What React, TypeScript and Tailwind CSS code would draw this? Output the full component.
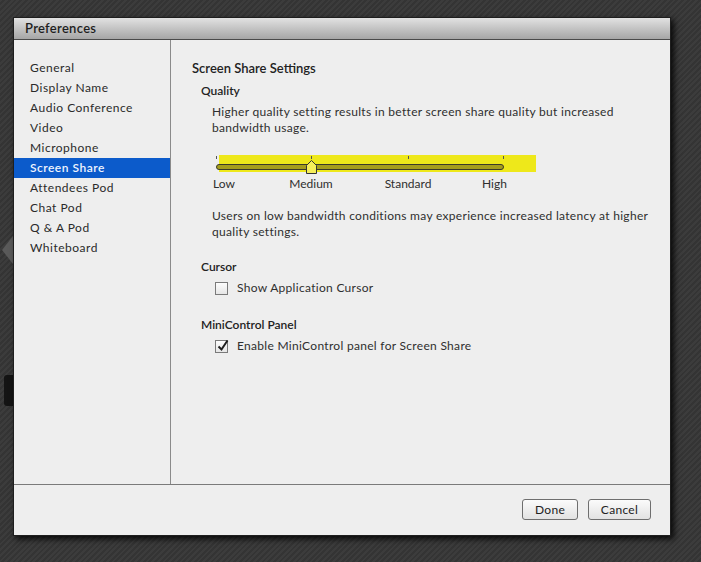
import React from "react";

const font = { fontFamily: "Lato, 'Open Sans', sans-serif" };

const navItems = [
  "General",
  "Display Name",
  "Audio Conference",
  "Video",
  "Microphone",
  "Screen Share",
  "Attendees Pod",
  "Chat Pod",
  "Q & A Pod",
  "Whiteboard",
];

function Checkbox({ checked }: { checked?: boolean }) {
  return (
    <span className="relative inline-block w-[13px] h-[13px] border border-[#7a7a7a] bg-gradient-to-b from-[#fdfdfd] to-[#e6e6e6]">
      {checked && (
        <svg className="absolute left-[1px] top-[-2px]" width="12" height="13" viewBox="0 0 12 13">
          <path d="M1.5 7.5 L4.5 10.5 L10.5 1.5" fill="none" stroke="#1e1e1e" strokeWidth="2" />
        </svg>
      )}
    </span>
  );
}

function Slider() {
  return (
    <div className="relative w-[330px] h-[42px] mt-[14px]">
      <svg width="330" height="26" viewBox="0 0 330 26" className="block">
        <rect x="7" y="5" width="317" height="17" fill="#eee81a" />
        {[4, 99, 196, 291].map((x) => (
          <line key={x} x1={x + 0.5} y1="6" x2={x + 0.5} y2="9" stroke="#555" strokeWidth="1" />
        ))}
        <rect x="4.5" y="14.5" width="287" height="5" rx="2.5" fill="#a59d1c" stroke="#3a3a2a" strokeWidth="1" />
        <polygon points="94.5,23.5 94.5,15.5 99.5,10.5 104.5,15.5 104.5,23.5" fill="#f6ef5a" stroke="#333" strokeWidth="1" />
      </svg>
      <div className="absolute left-[1px] top-[26px] text-[12px] leading-[16px] text-[#2e2e2e]">Low</div>
      <div className="absolute left-[99px] top-[26px] -translate-x-1/2 text-[12px] leading-[16px] text-[#2e2e2e]">Medium</div>
      <div className="absolute left-[196px] top-[26px] -translate-x-1/2 text-[12px] leading-[16px] text-[#2e2e2e]">Standard</div>
      <div className="absolute left-[270px] top-[26px] text-[12px] leading-[16px] text-[#2e2e2e]">High</div>
    </div>
  );
}

export default function App() {
  return (
    <div
      className="relative w-[701px] h-[562px] overflow-hidden bg-[#383838] bg-[repeating-linear-gradient(135deg,#3c3c3c_0px,#3c3c3c_2px,#343434_2px,#343434_4px)] pt-[17px] pl-[13px]"
      style={font}
    >
      <div className="absolute left-[2px] top-[236px] w-0 h-0 border-t-[14px] border-t-transparent border-b-[14px] border-b-transparent border-r-[11px] border-r-[#5a5a5a]" />
      <div className="absolute left-[4px] top-[375px] w-[12px] h-[31px] rounded-[3px] bg-[#141414]" />

      <div className="relative w-[658px] h-[519px] flex flex-col bg-[#eeeeee] border border-[#1e1e1e] shadow-[3px_3px_6px_rgba(0,0,0,0.85)]">
        {/* title bar */}
        <div className="h-[22px] flex items-center pl-[11px] bg-gradient-to-b from-[#e2e2e2] to-[#a6a6a6] border-b border-[#4a4a4a]">
          <span className="text-[13px] font-semibold text-[#1e1e1e] tracking-[0.3px]">Preferences</span>
        </div>

        {/* body */}
        <div className="flex h-[445px] border-b border-[#7a7a7a]">
          <div className="w-[157px] border-r border-[#8a8a8a] pt-[18px]">
            {navItems.map((item) => (
              <div
                key={item}
                className={
                  item === "Screen Share"
                    ? "h-[20px] flex items-center pl-[16px] bg-[#0c5bcb] text-[#eef4ff] font-semibold text-[12px] tracking-[0.5px]"
                    : "h-[20px] flex items-center pl-[16px] text-[#2a2a2a] text-[12px] tracking-[0.5px]"
                }
              >
                {item}
              </div>
            ))}
          </div>

          <div className="flex-1 pl-[21px] pt-[19px] text-[#2e2e2e]">
            <div className="h-[20px] flex items-center text-[13px] font-semibold text-[#222]">Screen Share Settings</div>
            <div className="mt-[2px] ml-[9px] h-[20px] flex items-center text-[12px] font-semibold text-[#222]">Quality</div>
            <div className="ml-[20px] mt-[3px] text-[12px] leading-[16px] w-[450px] tracking-[0.3px]">
              Higher quality setting results in better screen share quality but increased bandwidth usage.
            </div>
            <div className="ml-[20px]">
              <Slider />
            </div>
            <div className="ml-[20px] mt-[16px] text-[12px] leading-[16px] w-[450px] tracking-[0.3px]">
              Users on low bandwidth conditions may experience increased latency at higher quality settings.
            </div>
            <div className="mt-[17px] ml-[9px] h-[20px] flex items-center text-[12px] font-semibold text-[#222]">Cursor</div>
            <div className="mt-[1px] ml-[23px] h-[20px] flex items-center gap-[9px] text-[12px] tracking-[0.3px]">
              <Checkbox />
              <span>Show Application Cursor</span>
            </div>
            <div className="mt-[17px] ml-[9px] h-[20px] flex items-center text-[12px] font-semibold text-[#222]">MiniControl Panel</div>
            <div className="mt-[1px] ml-[23px] h-[20px] flex items-center gap-[9px] text-[12px] tracking-[0.3px]">
              <Checkbox checked />
              <span>Enable MiniControl panel for Screen Share</span>
            </div>
          </div>
        </div>

        {/* footer */}
        <div className="flex-1 flex justify-end items-start pt-[14px] pr-[19px] gap-[10px]">
          <button className="w-[56px] h-[21px] rounded-[3px] border border-[#6e6e6e] bg-gradient-to-b from-[#fbfbfb] to-[#e2e2e2] text-[12px] text-[#222] tracking-[0.3px]">
            Done
          </button>
          <button className="w-[63px] h-[21px] rounded-[3px] border border-[#6e6e6e] bg-gradient-to-b from-[#fbfbfb] to-[#e2e2e2] text-[12px] text-[#222] tracking-[0.3px]">
            Cancel
          </button>
        </div>
      </div>
    </div>
  );
}
